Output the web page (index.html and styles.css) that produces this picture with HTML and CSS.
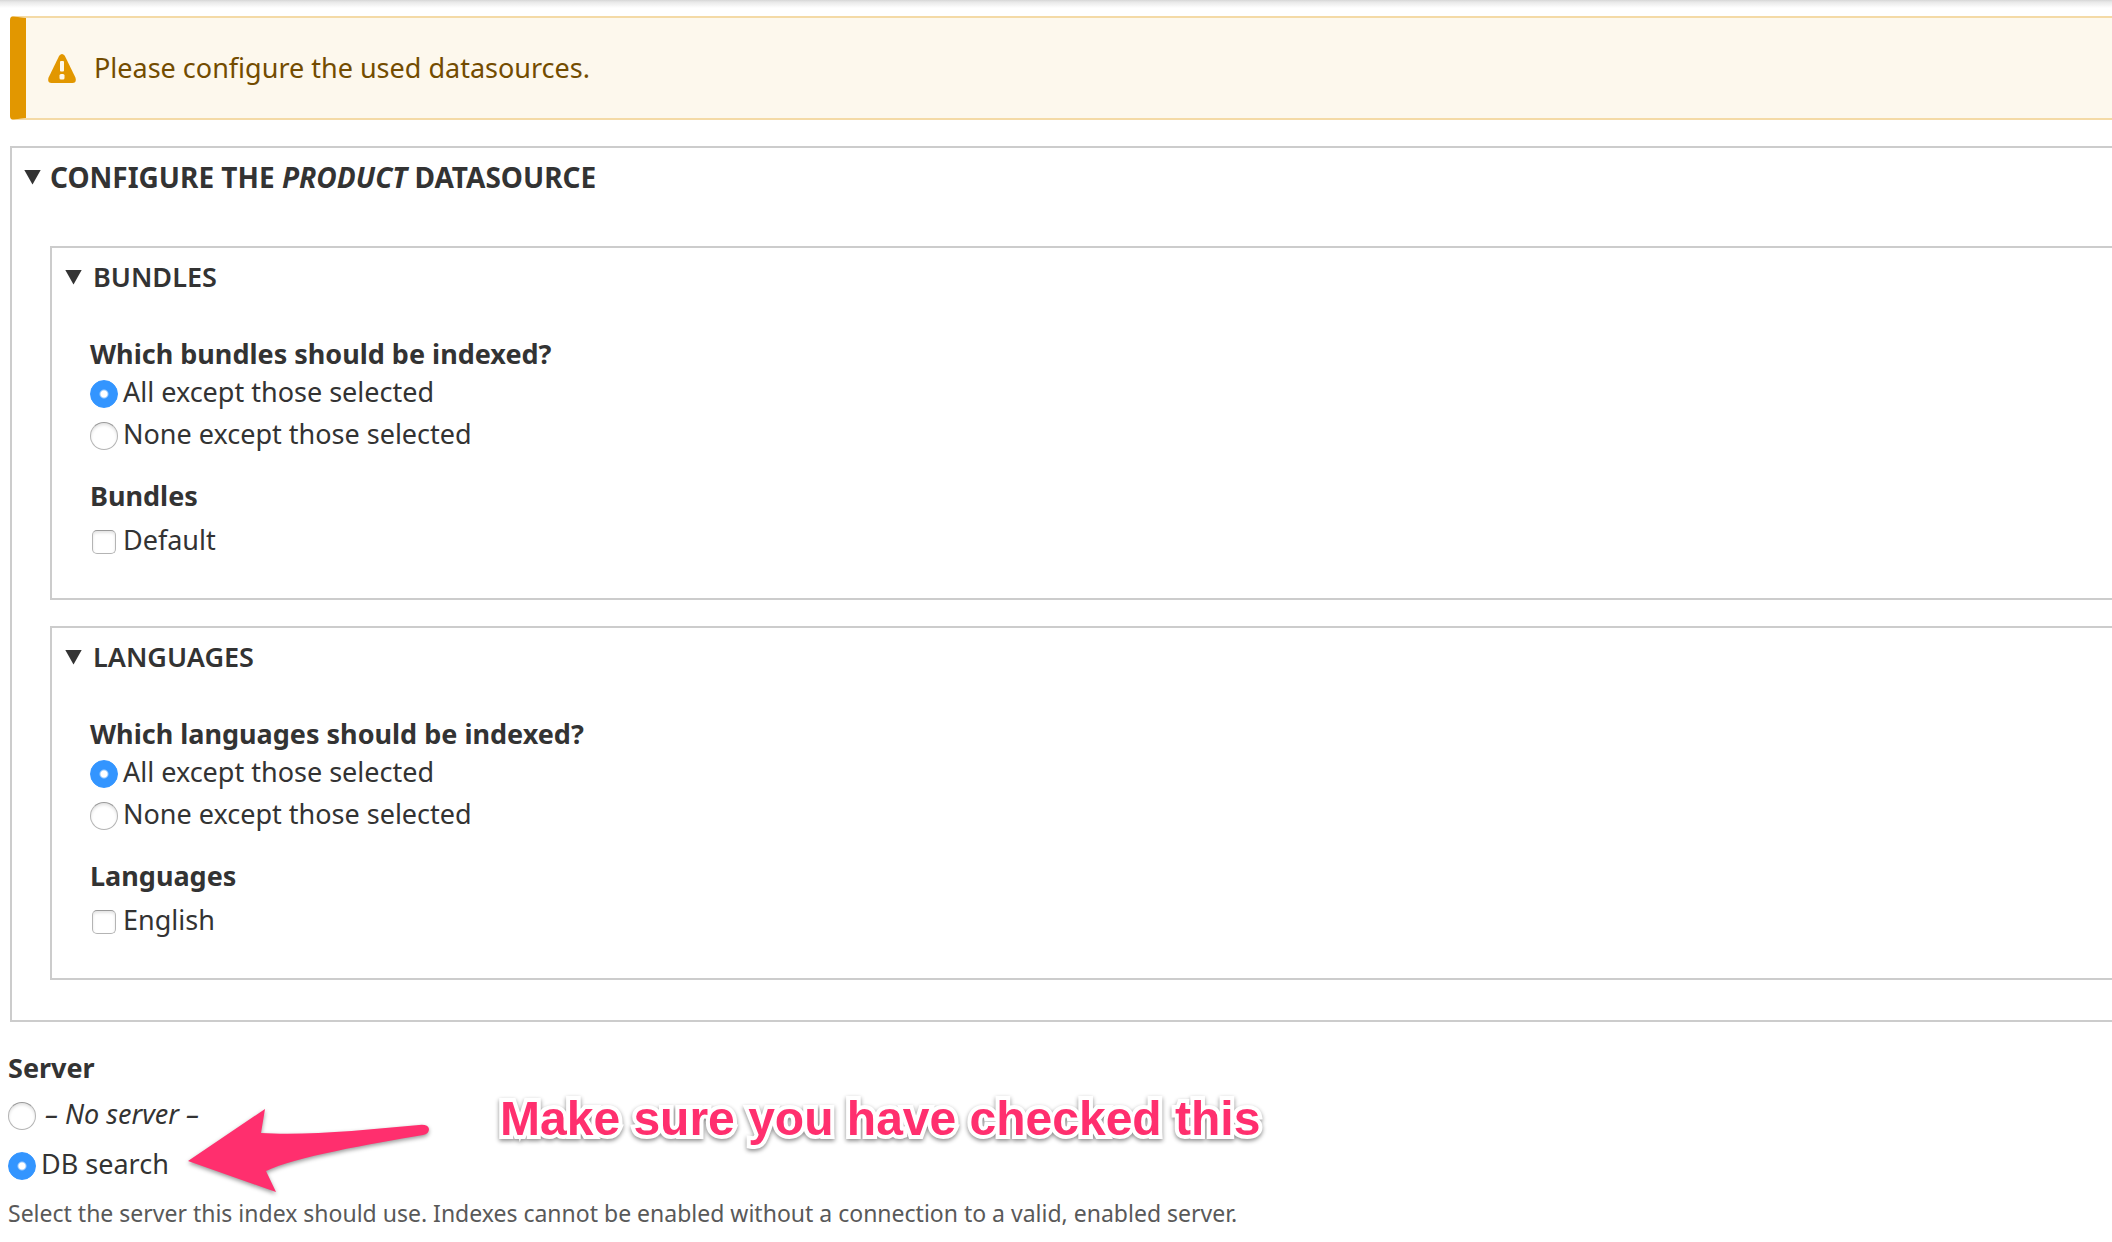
FILE: index.html
```html
<!DOCTYPE html>
<html lang="en">
<head>
<meta charset="utf-8">
<title>Edit search index</title>
<link rel="stylesheet" href="styles.css">
</head>
<body>
<main class="page">
  <div class="message" role="status">
    <svg class="message-icon" viewBox="0 0 28 29" aria-hidden="true">
      <path fill="#e29700" d="M11.200 1.700Q14-1.500 16.800 1.700L27.400 23.500Q29 28.700 24.500 29H3.500Q-1 28.700 .6 23.500Z"/>
      <path fill="#fdf8ed" d="M12 8Q12 7 13 7h2q1 0 1 1v8.500q0 1-1 1h-2q-1 0-1-1z"/>
      <rect fill="#fdf8ed" x="11.500" y="20" width="5" height="5.500" rx="1.500"/>
    </svg>
    <p class="message-text">Please configure the used datasources.</p>
  </div>

  <details class="panel panel-outer" open>
    <summary class="panel-title panel-title-main"><span>Configure the <em>product</em> datasource</span></summary>
    <div class="panel-list">
      <details class="panel" open>
        <summary class="panel-title">Bundles</summary>
        <div class="panel-body">
          <fieldset class="group">
            <legend class="group-title">Which bundles should be indexed?</legend>
            <div class="options">
              <label class="option"><input class="radio" type="radio" name="bundles-mode" checked>All except those selected</label>
              <label class="option"><input class="radio" type="radio" name="bundles-mode">None except those selected</label>
            </div>
          </fieldset>
          <fieldset class="group group-spaced">
            <legend class="group-title">Bundles</legend>
            <div class="options">
              <label class="option"><input class="checkbox" type="checkbox" name="bundle">Default</label>
            </div>
          </fieldset>
        </div>
      </details>
      <details class="panel" open>
        <summary class="panel-title">Languages</summary>
        <div class="panel-body">
          <fieldset class="group">
            <legend class="group-title">Which languages should be indexed?</legend>
            <div class="options">
              <label class="option"><input class="radio" type="radio" name="languages-mode" checked>All except those selected</label>
              <label class="option"><input class="radio" type="radio" name="languages-mode">None except those selected</label>
            </div>
          </fieldset>
          <fieldset class="group group-spaced">
            <legend class="group-title">Languages</legend>
            <div class="options">
              <label class="option"><input class="checkbox" type="checkbox" name="language">English</label>
            </div>
          </fieldset>
        </div>
      </details>
    </div>
  </details>

  <section class="server">
    <fieldset class="group group-server" aria-describedby="server-help">
      <legend class="group-title">Server</legend>
      <div class="options">
        <label class="option"><input class="radio" type="radio" name="server"><em class="option-empty">– No server –</em></label>
        <label class="option"><input class="radio" type="radio" name="server" checked>DB search</label>
      </div>
    </fieldset>
    <p class="help" id="server-help">Select the server this index should use. Indexes cannot be enabled without a connection to a valid, enabled server.</p>
    <svg class="arrow" viewBox="0 0 260 100" aria-hidden="true">
      <path fill="#ff2f6e" d="M8 60L85 8L81 32C125 35 185 29 239 24Q248 23 249 28Q249 33 243 34C190 43 115 56 86 70L96 91Z"/>
    </svg>
    <p class="callout">Make sure you have checked this</p>
  </section>
</main>
</body>
</html>
```
FILE: styles.css
```css
* {
  box-sizing: border-box;
}

body {
  margin: 0;
  background: linear-gradient(#d6d6d6, #e8e8e8 2px, #fff 8px) no-repeat 0 0 / 100% 8px #fff;
  color: #333;
  font: 27px/32px "Noto Sans", "Open Sans", sans-serif;
}

p {
  margin: 0;
}

.page {
  padding: 16px 0 12px 10px;
}

/* Warning message */
.message {
  display: flex;
  align-items: center;
  gap: 18px;
  padding: 34px 22px;
  border: solid #f4daa6;
  border-width: 2px 0;
  border-left: 16px solid #e29700;
  border-radius: 4px 0 0 4px;
  background: #fdf8ed;
  color: #734c00;
}

.message-icon {
  width: 28px;
  height: 29px;
}

/* Collapsible panels */
.panel {
  border: 2px solid #ccc;
  border-right: 0;
}

.panel-outer {
  margin-top: 26px;
}

.panel-title {
  display: flex;
  align-items: center;
  gap: 11px;
  padding: 13px 0 0 13px;
  font-weight: 600;
  text-transform: uppercase;
  list-style: none;
}

.panel-title-main {
  gap: 9px;
  padding-left: 12px;
  font-size: 28px;
  font-weight: 700;
}

.panel-title::before {
  content: "";
  width: 17px;
  height: 15px;
  background: #333;
  clip-path: polygon(0 0, 100% 0, 50% 100%);
}

.panel-list {
  display: flex;
  flex-direction: column;
  gap: 26px;
  padding: 53px 0 40px 38px;
}

.panel-body {
  padding: 45px 0 42px 38px;
}

/* Form groups */
.group {
  min-width: 0;
  margin: 0;
  padding: 0;
  border: 0;
}

.group-spaced {
  margin-top: 30px;
}

.group-title {
  padding: 0;
  font-weight: 700;
}

.options {
  display: flex;
  flex-direction: column;
  align-items: flex-start;
  gap: 10px;
  padding-top: 6px;
}

.group-spaced .options {
  padding-top: 12px;
}

.group-server .options {
  gap: 18px;
  padding-top: 14px;
}

.option {
  display: flex;
}

.option-empty {
  padding-left: 4px;
}

.radio,
.checkbox {
  appearance: none;
  flex: none;
  border: 1px solid #b4b4b4;
  border-top-color: #999;
  background: #fff;
  box-shadow: inset 0 2px 3px #e4e4e4;
}

.radio {
  width: 28px;
  height: 28px;
  margin: 4px 5px 0 0;
  border-radius: 50%;
}

.radio:checked {
  border-color: #3395ff;
  background: radial-gradient(circle, #fff 3px, #3395ff 5px);
  box-shadow: none;
}

.checkbox {
  width: 24px;
  height: 24px;
  margin: 6px 7px 2px 2px;
  border-radius: 5px;
}

/* Server choice */
.server {
  position: relative;
  margin: 30px 0 0 -2px;
}

.help {
  margin-top: 17px;
  color: #595959;
  font-size: 23px;
}

.arrow {
  position: absolute;
  top: 49px;
  left: 172px;
  width: 260px;
  height: 100px;
  filter: drop-shadow(0 2px 2px rgb(0 0 0 / 40%));
}

.callout {
  position: absolute;
  top: 39px;
  left: 492px;
  color: #ff2f6e;
  font: 700 48px/56px "Liberation Sans", Arial, sans-serif;
  white-space: nowrap;
  -webkit-text-stroke: 8px #fff;
  paint-order: stroke fill;
  filter: drop-shadow(0 2px 2px rgb(0 0 0 / 45%));
}
```
